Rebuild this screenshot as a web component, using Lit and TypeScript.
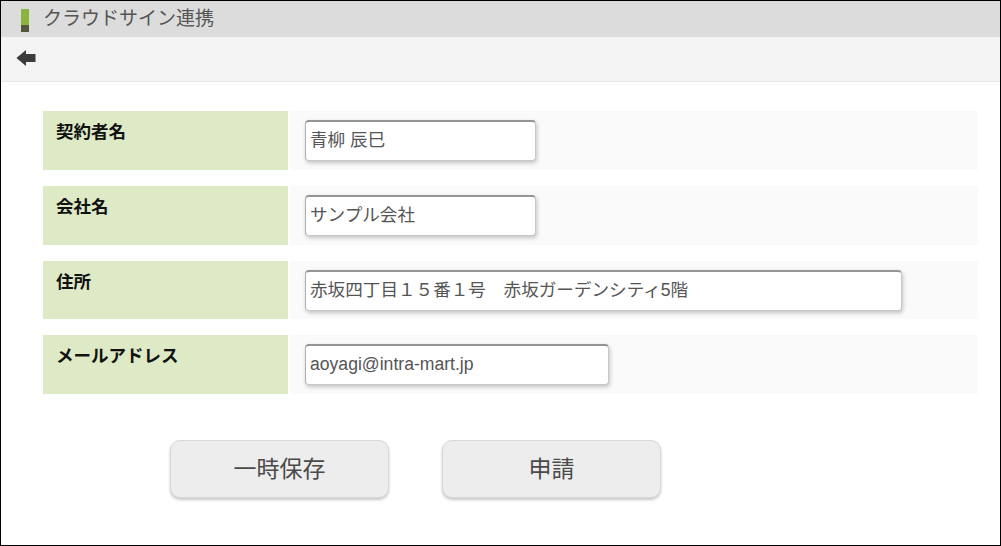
import { LitElement, html, css } from "lit";
import { customElement } from "lit/decorators.js";

const rows = [
  { label: "契約者名", value: "青柳 辰巳", cls: "s" },
  { label: "会社名", value: "サンプル会社", cls: "s" },
  { label: "住所", value: "赤坂四丁目１５番１号　赤坂ガーデンシティ5階", cls: "l" },
  { label: "メールアドレス", value: "aoyagi@intra-mart.jp", cls: "m" },
];

@customElement("app-root")
export class AppRoot extends LitElement {
  static styles = css`
    :host {
      display: block;
      width: 1001px;
      height: 546px;
      box-sizing: border-box;
      border: 1px solid #000;
      background: #fff;
      overflow: hidden;
      font-family: "Liberation Sans", "Noto Sans CJK JP", sans-serif;
    }
    .title {
      height: 36px;
      background: #dcdcdc;
      display: flex;
      align-items: center;
      padding-left: 20px;
      gap: 14px;
      color: #555;
      font-size: 19px;
    }
    .title-text { margin-top: -5px; }
    .mark {
      width: 8px;
      height: 23px;
      display: flex;
      flex-direction: column;
      margin-top: 2px;
    }
    .mark i { display: block; height: 16px; background: #8cb33e; }
    .mark b { display: block; height: 7px; background: #54563f; }
    .tools {
      height: 44px;
      background: #f4f4f4;
      border-bottom: 1px solid #e8e8e8;
      display: flex;
      align-items: center;
      padding-left: 14px;
    }
    .tools svg { display: block; margin-top: -2px; }
    .form {
      padding: 29px 22px 0 42px;
      display: flex;
      flex-direction: column;
      gap: 16px;
    }
    .row {
      display: flex;
      height: 58.8px;
      gap: 2px;
    }
    .label {
      width: 245px;
      background: #deeac5;
      box-sizing: border-box;
      padding: 10px 13px;
      font-size: 17.5px;
      line-height: 22px;
      font-weight: 700;
      color: #111;
    }
    .value {
      flex: 1;
      background: #fafafa;
      padding: 9px 0 0 15px;
    }
    .input {
      height: 41px;
      box-sizing: border-box;
      background: #fff;
      border: 1px solid #c8c8c8;
      border-top: 2px solid #959595;
      border-left-color: #b0b0b0;
      border-radius: 4px;
      box-shadow: 1px 2px 4px rgba(0, 0, 0, 0.22);
      font-size: 17.6px;
      line-height: 37px;
      color: #555;
      padding-left: 4px;
      white-space: nowrap;
    }
    .s { width: 231px; }
    .m { width: 304px; }
    .l { width: 597px; }
    .actions {
      display: flex;
      gap: 53px;
      padding: 46px 0 0 169px;
    }
    button {
      width: 219px;
      height: 58px;
      box-sizing: border-box;
      border: 1px solid #d8d8d8;
      border-radius: 10px;
      background: #ededed;
      box-shadow: 0 2px 3px rgba(0, 0, 0, 0.22);
      color: #4a4a4a;
      font-family: inherit;
      font-size: 23px;
      padding: 0 0 5px;
    }
  `;

  render() {
    return html`
      <div class="title">
        <span class="mark"><i></i><b></b></span>
        <span class="title-text">クラウドサイン連携</span>
      </div>
      <div class="tools">
        <svg width="21" height="18" viewBox="0 0 21 18" aria-label="戻る">
          <path d="M1.5 9 Q2 8.5 11 1 V5 H20.5 V13 H11 V17 Q2 9.5 1.5 9 Z" fill="#3c3c3c" />
        </svg>
      </div>
      <div class="form">
        ${rows.map(
          (r) => html`<div class="row">
            <div class="label">${r.label}</div>
            <div class="value"><div class="input ${r.cls}" role="textbox">${r.value}</div></div>
          </div>`
        )}
      </div>
      <div class="actions">
        <button>一時保存</button>
        <button>申請</button>
      </div>
    `;
  }
}
